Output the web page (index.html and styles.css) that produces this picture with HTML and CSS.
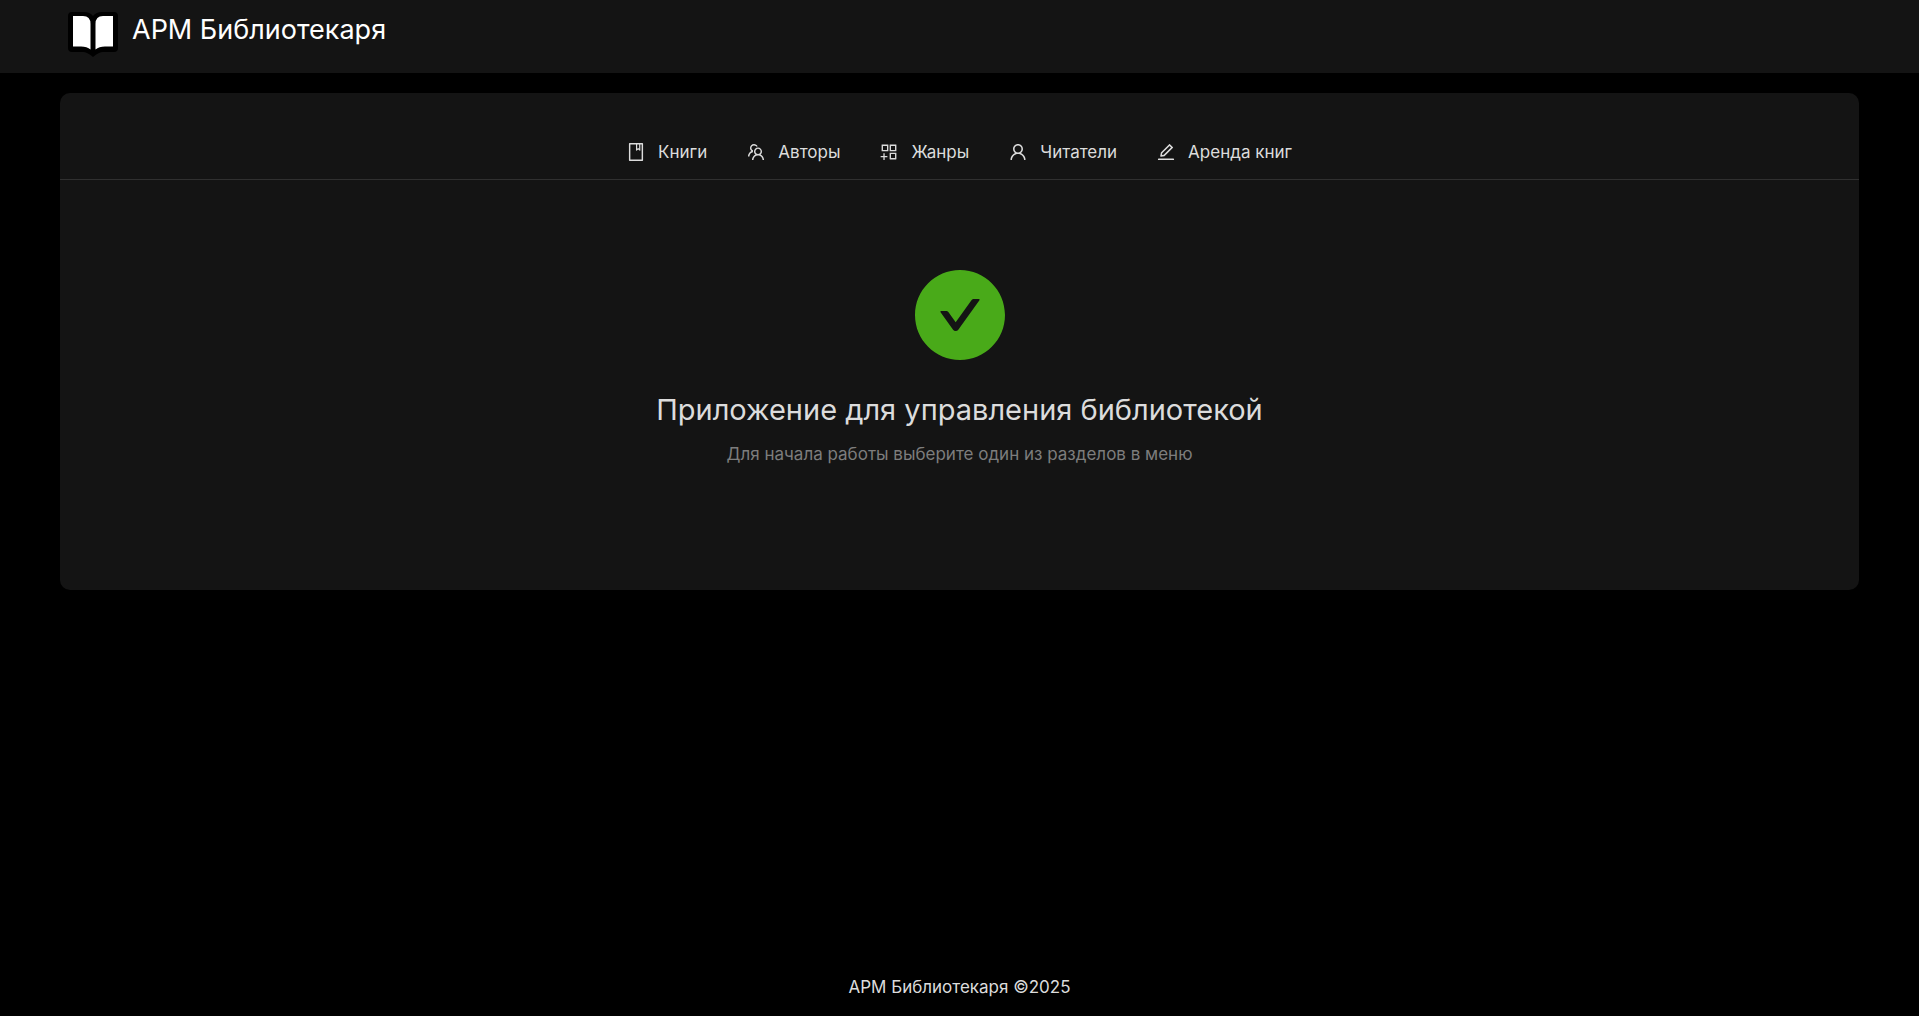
FILE: index.html
```html
<!DOCTYPE html>
<html lang="ru">
<head>
<meta charset="utf-8">
<meta name="viewport" content="width=device-width, initial-scale=1">
<title>АРМ Библиотекаря</title>
<link rel="stylesheet" href="styles.css">
</head>
<body>
<header class="header">
  <svg class="logo" viewBox="0 0 50 46" aria-hidden="true">
    <path fill="#000" d="M4 0H16Q22 0 25 4Q28 0 34 0H46Q50 0 50 4V36Q50 40 46 40H35Q31 40 25 45Q19 40 15 40H4Q0 40 0 36V4Q0 0 4 0Z"/>
    <path fill="#fff" d="M5 4H15Q22.500 4 22.500 12V37.500Q19 34.500 13 34.500H5ZM45 4H35Q27.500 4 27.500 12V37.500Q31 34.500 37 34.500H45Z"/>
  </svg>
  <h1 class="brand">АРМ Библиотекаря</h1>
</header>
<main class="card">
  <nav class="menu">
    <a class="menu-item" href="#books"><svg class="icon" viewBox="64 64 896 896" aria-hidden="true"><path d="M832 64H192c-17.700 0-32 14.300-32 32v832c0 17.700 14.300 32 32 32h640c17.700 0 32-14.300 32-32V96c0-17.700-14.300-32-32-32zm-260 72h96v209.900L621.500 312 572 347.400V136zm220 752H232V136h280v296.900c0 3.300 1 6.600 3 9.300a15.900 15.900 0 0022.300 3.700l83.800-59.900 81.400 59.400c2.700 2 6 3.100 9.400 3.100 8.800 0 16-7.200 16-16V136h64v752z"/></svg><span>Книги</span></a>
    <a class="menu-item" href="#authors"><svg class="icon" viewBox="64 64 896 896" aria-hidden="true"><path d="M824.200 699.900a301.550 301.550 0 00-86.400-60.400C783.100 602.800 812 546.800 812 484c0-110.800-92.400-201.700-203.200-200-109.100 1.700-197 90.600-197 200 0 62.800 29 118.800 74.200 155.500a300.950 300.950 0 00-86.400 60.400C345 754.600 314 826.800 312 903.800a8 8 0 008 8.200h56c4.300 0 7.900-3.400 8-7.700 1.900-58 25.400-112.300 66.700-153.500A226.620 226.620 0 01612 684c60.900 0 118.200 23.700 161.300 66.800C814.600 792 838 846.300 840 904.300c.1 4.300 3.700 7.700 8 7.700h56a8 8 0 008-8.200c-2-77-33-149.200-87.800-203.900zM612 612c-34.200 0-66.400-13.300-90.500-37.500a126.860 126.860 0 01-37.500-91.800c.3-32.800 13.400-64.500 36.300-88 24-24.600 56.100-38.300 90.400-38.700 33.900-.3 66.800 12.900 91 36.600 24.800 24.300 38.400 56.800 38.400 91.400 0 34.200-13.300 66.300-37.500 90.500A127.300 127.300 0 01612 612zM361.500 510.400c-.9-8.700-1.400-17.500-1.400-26.400 0-15.900 1.500-31.400 4.300-46.500.7-3.600-1.200-7.300-4.500-8.800-13.600-6.100-26.100-14.500-36.900-25.100a127.540 127.540 0 01-38.700-95.400c.9-32.100 13.800-62.600 36.300-85.600 24.700-25.300 57.900-39.100 93.200-38.700 31.900.3 62.700 12.600 86 34.400 7.900 7.400 14.700 15.600 20.400 24.400 2 3.100 5.900 4.400 9.300 3.200 17.600-6.100 36.200-10.400 55.300-12.400 5.600-.6 8.800-6.600 6.300-11.600-32.500-64.300-98.900-108.700-175.700-109.900-110.900-1.700-203.300 89.200-203.300 199.900 0 62.800 28.900 118.800 74.200 155.500-31.800 14.700-61.100 35-86.500 60.400-54.800 54.700-85.800 126.900-87.800 204a8 8 0 008 8.200h56.100c4.300 0 7.900-3.400 8-7.700 1.900-58 25.400-112.300 66.700-153.500 29.400-29.400 65.400-49.800 104.700-59.700 3.900-1 6.500-4.700 6-8.700z"/></svg><span>Авторы</span></a>
    <a class="menu-item" href="#genres"><svg class="icon" viewBox="64 64 896 896" aria-hidden="true"><path d="M464 144H160c-8.800 0-16 7.200-16 16v304c0 8.800 7.200 16 16 16h304c8.800 0 16-7.200 16-16V160c0-8.800-7.200-16-16-16zm-52 268H212V212h200v200zm452-268H560c-8.800 0-16 7.200-16 16v304c0 8.800 7.200 16 16 16h304c8.800 0 16-7.200 16-16V160c0-8.800-7.200-16-16-16zm-52 268H612V212h200v200zm52 132H560c-8.800 0-16 7.200-16 16v304c0 8.800 7.200 16 16 16h304c8.800 0 16-7.200 16-16V560c0-8.800-7.200-16-16-16zm-52 268H612V612h200v200zM424 712H296V584c0-4.400-3.600-8-8-8h-48c-4.400 0-8 3.600-8 8v128H104c-4.400 0-8 3.600-8 8v48c0 4.400 3.600 8 8 8h128v128c0 4.400 3.600 8 8 8h48c4.400 0 8-3.600 8-8V776h128c4.400 0 8-3.600 8-8v-48c0-4.400-3.600-8-8-8z"/></svg><span>Жанры</span></a>
    <a class="menu-item" href="#readers"><svg class="icon" viewBox="64 64 896 896" aria-hidden="true"><path d="M858.500 763.600a374 374 0 00-80.600-119.500 375.630 375.630 0 00-119.500-80.600c-.4-.2-.8-.3-1.200-.5C719.500 518 760 444.700 760 362c0-137-111-248-248-248S264 225 264 362c0 82.700 40.500 156 102.800 201.100-.4.2-.8.3-1.200.5-44.800 18.900-85 46-119.500 80.600a375.630 375.630 0 00-80.600 119.500A371.700 371.700 0 00136 901.800a8 8 0 008 8.200h60c4.400 0 7.900-3.500 8-7.800 2-77.200 33-149.500 87.800-204.300 56.700-56.700 132-87.900 212.200-87.900s155.500 31.200 212.200 87.900C779 752.700 810 825 812 902.200c.1 4.400 3.600 7.800 8 7.800h60a8 8 0 008-8.200c-1-47.800-10.900-94.300-29.500-138.200zM512 534c-45.900 0-89.100-17.900-121.600-50.400S340 407.900 340 362c0-45.900 17.900-89.100 50.400-121.600S466.100 190 512 190s89.100 17.900 121.600 50.400S684 316.100 684 362c0 45.900-17.900 89.100-50.400 121.600S557.900 534 512 534z"/></svg><span>Читатели</span></a>
    <a class="menu-item" href="#rent"><svg class="icon" viewBox="64 64 896 896" aria-hidden="true"><path d="M257.700 752c2 0 4-.2 6-.5L431.900 722c2-.4 3.900-1.300 5.300-2.800l423.900-423.900a9.960 9.960 0 000-14.100L694.900 114.900c-1.900-1.900-4.400-2.900-7.100-2.900s-5.200 1-7.100 2.900L256.800 538.800c-1.500 1.500-2.400 3.300-2.800 5.300l-29.500 168.200a33.500 33.500 0 009.400 29.800c6.600 6.400 14.900 9.900 23.800 9.900zm67.400-174.400L687.800 215l73.300 73.300-362.700 362.600-88.900 15.700 15.600-89zM880 836H144c-17.700 0-32 14.300-32 32v36c0 4.400 3.600 8 8 8h784c4.400 0 8-3.600 8-8v-36c0-17.700-14.300-32-32-32z"/></svg><span>Аренда книг</span></a>
  </nav>
  <section class="result">
    <svg class="result-icon" viewBox="64 64 896 896" aria-hidden="true"><path d="M512 64C264.600 64 64 264.600 64 512s200.600 448 448 448 448-200.600 448-448S759.400 64 512 64zm193.500 301.700l-210.600 292a31.800 31.800 0 01-51.700 0L318.500 484.900c-3.800-5.300 0-12.700 6.500-12.700h46.900c10.200 0 19.900 4.900 25.900 13.300l71.200 98.800 157.200-218c6-8.300 15.600-13.300 25.900-13.300H699c6.500 0 10.300 7.400 6.500 12.700z"/></svg>
    <h2 class="result-title">Приложение для управления библиотекой</h2>
    <p class="result-text">Для начала работы выберите один из разделов в меню</p>
  </section>
</main>
<footer class="footer">АРМ Библиотекаря ©2025</footer>
</body>
</html>
```
FILE: styles.css
```css
* {
  box-sizing: border-box;
}

body {
  display: flex;
  flex-direction: column;
  min-height: 100vh;
  margin: 0;
  background: #000;
  color: #dcdcdc;
  font-family: Inter, "Open Sans", sans-serif;
  font-size: 17px;
  line-height: 28px;
}

.header {
  display: flex;
  gap: 14px;
  padding: 12px 68px 15px;
  background: #141414;
}

.logo {
  width: 50px;
  height: 46px;
}

.brand {
  margin: 0;
  color: #fff;
  font-size: 27px;
  font-weight: 400;
  line-height: 36px;
}

.card {
  margin: 20px 60px;
  padding: 32px 0;
  border-radius: 10px;
  background: #141414;
}

.menu {
  display: flex;
  flex-wrap: wrap;
  justify-content: center;
  border-bottom: 1px solid #303030;
}

.menu-item {
  display: flex;
  align-items: center;
  gap: 13px;
  padding: 0 20px;
  color: inherit;
  line-height: 54px;
  text-decoration: none;
}

.icon {
  width: 18px;
  height: 18px;
  fill: currentColor;
}

.result {
  display: flex;
  flex-direction: column;
  align-items: center;
  padding: 90px 40px;
  text-align: center;
}

.result-icon {
  width: 90px;
  height: 90px;
  fill: #49aa19;
}

.result-title {
  margin: 30px 0 10px;
  font-size: 29px;
  font-weight: 400;
  line-height: 40px;
}

.result-text {
  margin: 0;
  color: #7d7d7d;
}

.footer {
  margin-top: auto;
  padding: 16px 60px 15px;
  text-align: center;
}
```
